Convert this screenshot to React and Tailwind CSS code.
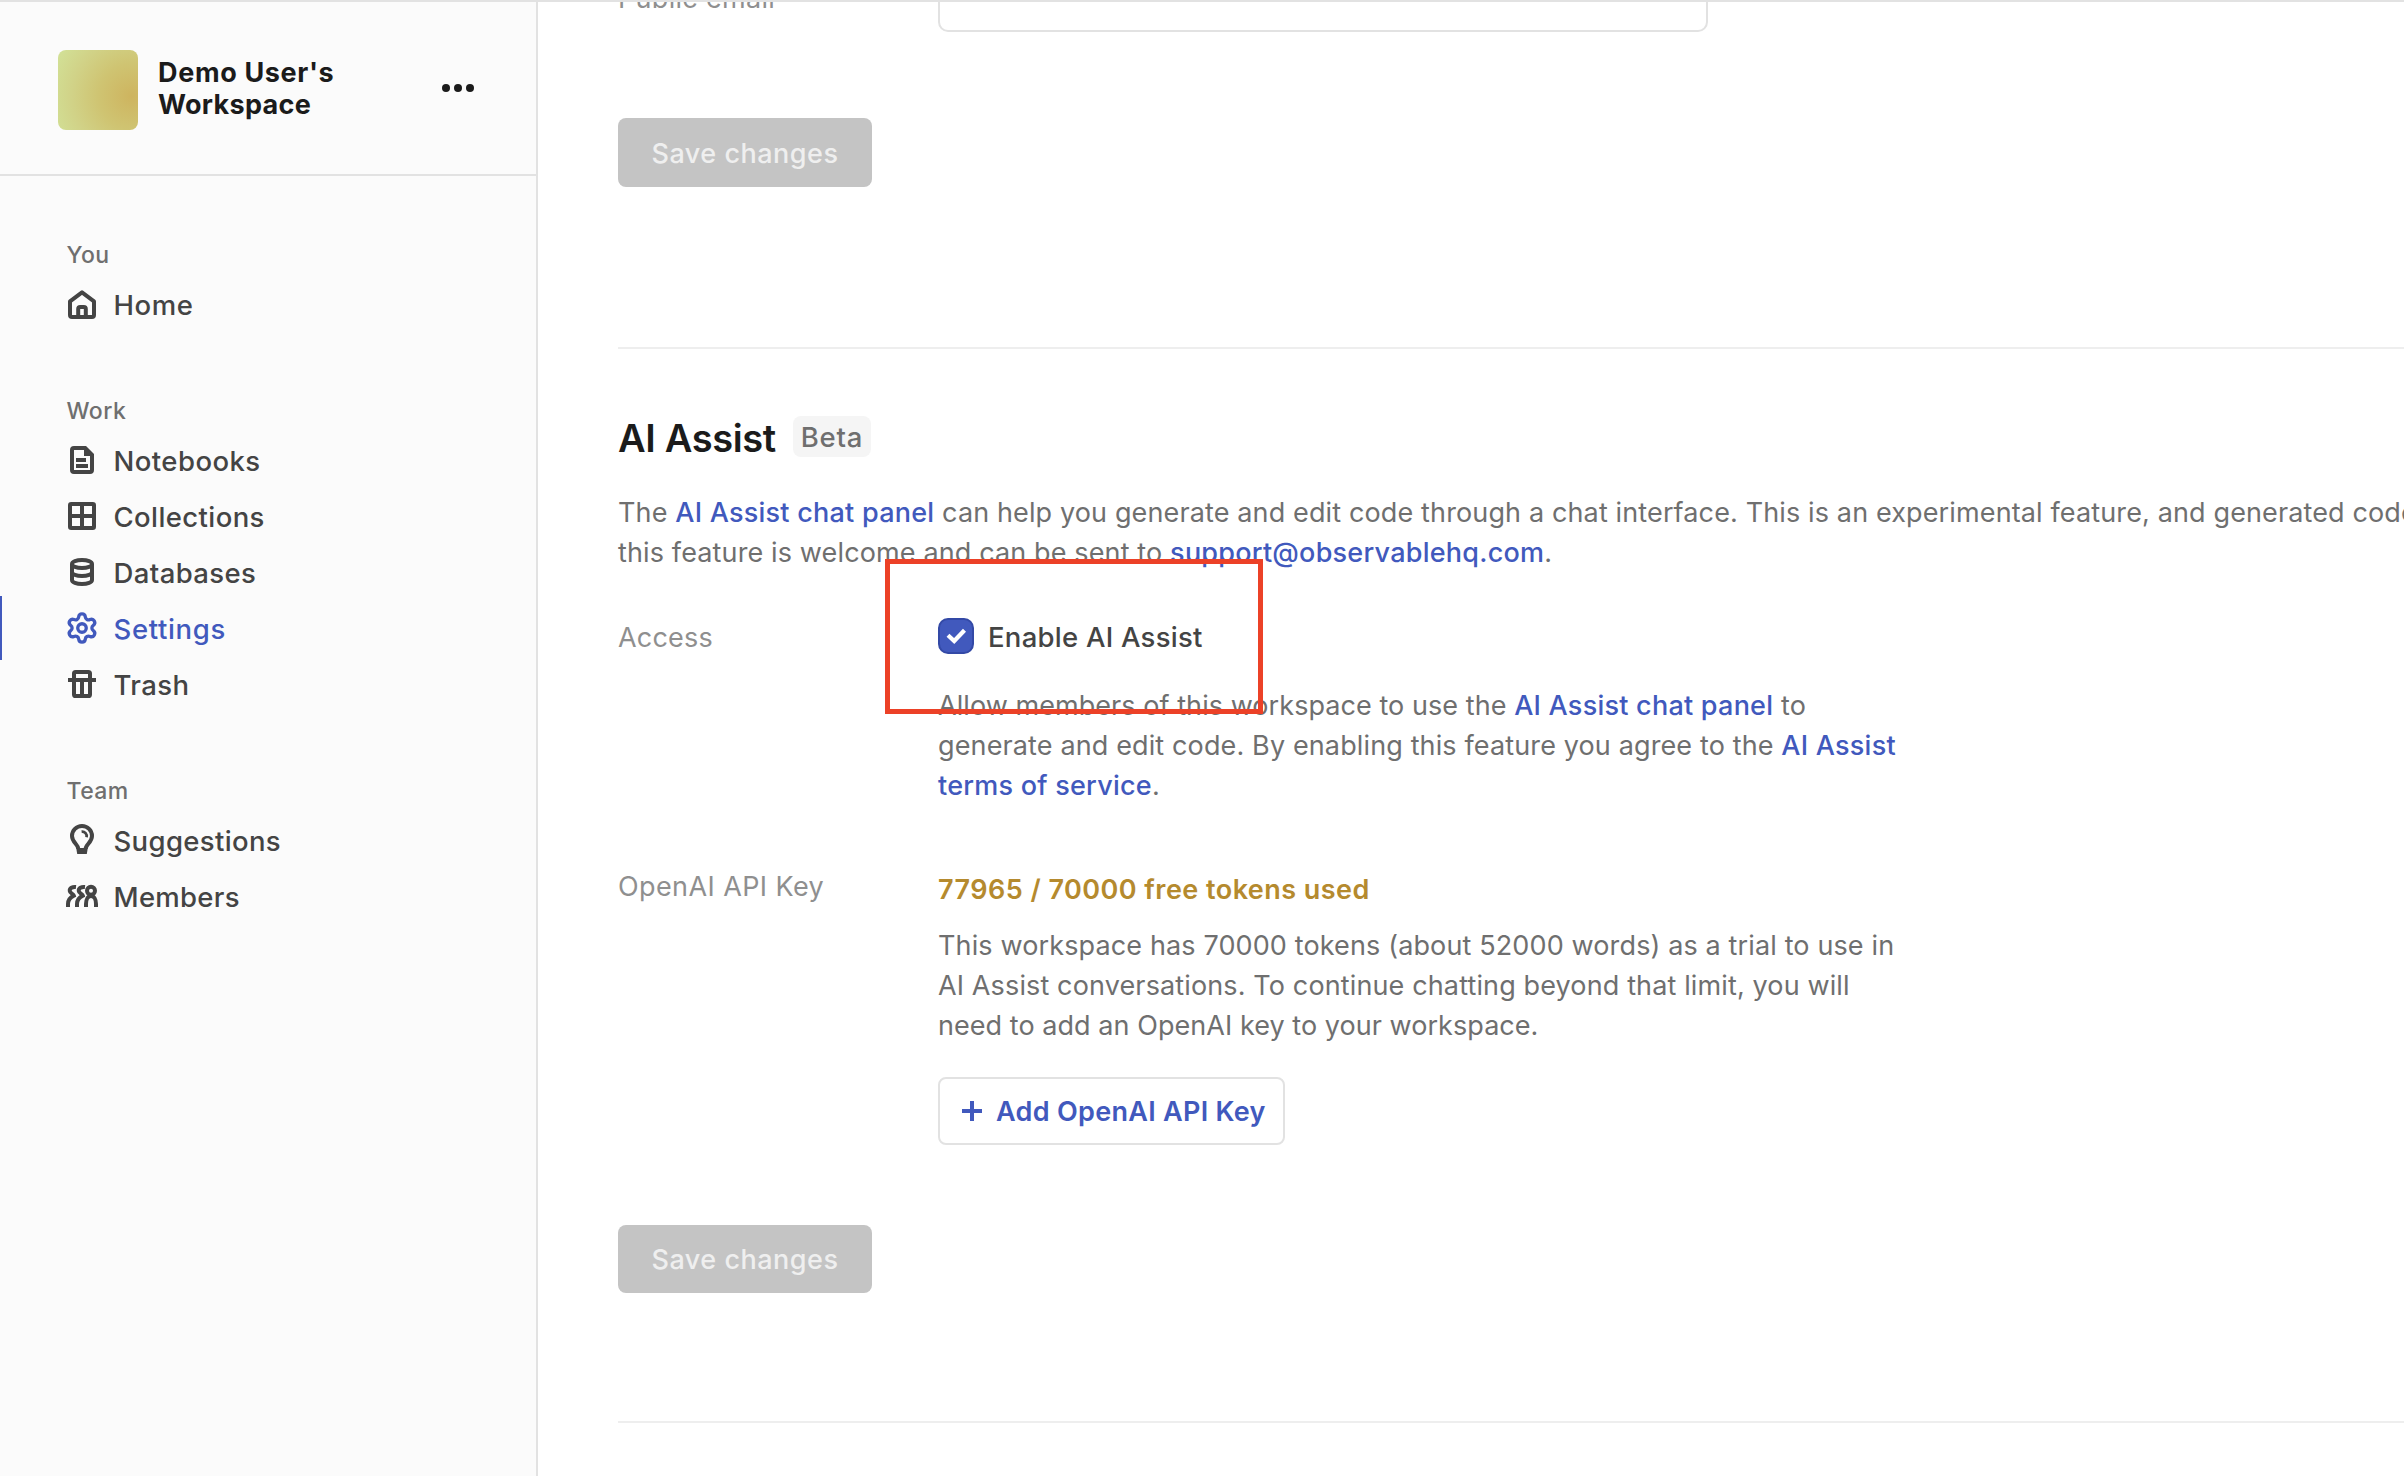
import React from "react";
import { Settings as GearIcon } from "lucide-react";

function Glyph({ children }) {
  return (
    <svg viewBox="0 0 16 16" className="size-8" fill="none" stroke="currentColor" strokeWidth="2">
      {children}
    </svg>
  );
}

const HomeIcon = () => (
  <Glyph>
    <path d="M2 6.7 8 2.2l6 4.5v6.8a1 1 0 0 1-1 1H3a1 1 0 0 1-1-1z" strokeLinejoin="round" />
    <path d="M6.1 14.5v-4a1 1 0 0 1 1-1h1.8a1 1 0 0 1 1 1v4" />
  </Glyph>
);
const NotebookIcon = () => (
  <Glyph>
    <path d="M3 3a1 1 0 0 1 1-1h5.6L13 5.4V13a1 1 0 0 1-1 1H4a1 1 0 0 1-1-1z" />
    <path d="M9 2v4h4.5L9.6 2z" fill="currentColor" stroke="none" />
    <path d="M5 8h5M5 11h6" />
  </Glyph>
);
const GridIcon = () => (
  <Glyph>
    <rect x="2" y="2" width="12" height="12" rx="0.6" />
    <path d="M8 2v12M2 8h12" />
  </Glyph>
);
const DatabaseIcon = () => (
  <Glyph>
    <ellipse cx="8" cy="4" rx="5" ry="2" />
    <path d="M3 4v8c0 1.1 2.2 2 5 2s5-.9 5-2V4M3 8c0 1.1 2.2 2 5 2s5-.9 5-2" />
  </Glyph>
);
const SettingsIcon = () => <GearIcon size={34} strokeWidth={2.35} />;
const TrashIcon = () => (
  <Glyph>
    <rect x="4" y="2" width="8" height="12" rx="0.8" />
    <path d="M1 6h14M8 6v8" />
  </Glyph>
);
const BulbIcon = () => (
  <Glyph>
    <path d="M6.2 12.5C6.2 10.300 3 9.2 3 6a5 5 0 0 1 10 0c0 3.2-3.2 4.3-3.2 6.5" />
    <path d="M5.100 12h5.800l-.5 3H5.600z" fill="currentColor" stroke="none" />
    <path d="M7.800 3.800A2.300 2.300 0 0 1 10.300 6.600" strokeWidth="1.400" />
  </Glyph>
);
const MembersIcon = () => (
  <Glyph>
    <circle cx="12.500" cy="5.400" r="2" />
    <path d="M10 13.500V12c0-2.400 1-4 2.500-4S15 9.600 15 12v1.500" />
    <path d="M5 3.500C3.200 3.300 1.700 4.100 1.900 5.500c.1 1.200 1.700 1.300 2 2.300C2.100 8.700 1 10.300 1 12v1.500" />
    <path d="M9.500 3.500C7.700 3.300 6.200 4.100 6.400 5.500c.1 1.200 1.700 1.300 2 2.300C6.600 8.700 5.500 10.300 5.500 12v1.500" />
  </Glyph>
);

const groups = [
  { label: "You", items: [{ name: "Home", icon: HomeIcon, track: "tracking-[0.6px]" }] },
  {
    label: "Work",
    items: [
      { name: "Notebooks", icon: NotebookIcon, track: "tracking-[0.45px]" },
      { name: "Collections", icon: GridIcon, track: "tracking-[0.4px]" },
      { name: "Databases", icon: DatabaseIcon, track: "tracking-[0.4px]" },
      { name: "Settings", icon: SettingsIcon, track: "tracking-[0.65px]", active: true },
      { name: "Trash", icon: TrashIcon, track: "tracking-[0.4px]" },
    ],
  },
  {
    label: "Team",
    items: [
      { name: "Suggestions", icon: BulbIcon, track: "tracking-[0.35px]" },
      { name: "Members", icon: MembersIcon, track: "tracking-[0.3px]" },
    ],
  },
];

function NavItem({ item }) {
  const Icon = item.icon;
  return (
    <a className={"relative flex h-14 items-center pl-[66px] " + (item.active ? "text-[#4159bd]" : "text-[#444444]")}>
      {item.active && <span className="absolute left-0 top-[-5px] h-16 w-0.5 bg-[#4159bd]" />}
      <span className="-mt-0.5 flex size-8 items-center justify-center [&>svg]:shrink-0">
        <Icon />
      </span>
      <span className={"ml-[15.5px] text-[27.5px] font-[550] " + item.track}>{item.name}</span>
    </a>
  );
}

function Sidebar() {
  return (
    <aside className="w-[538px] shrink-0 border-r-2 border-[#e2e2e2] bg-[#fbfbfb]">
      <div className="flex h-[174px] items-start border-b-2 border-[#e2e2e2] pl-[58px]">
        <div className="mt-12 size-20 rounded-lg bg-[radial-gradient(circle_at_92%_58%,#ceb45f_0%,#cfc472_38%,#d1d287_68%,#d2e298_100%)]" />
        <div className="ml-5 mt-[55px] w-[270px] text-[27px] font-bold leading-8 text-[#1b1b1b]">
          <div className="tracking-[0.65px]">Demo User's</div>
          <div className="tracking-[0.3px]">Workspace</div>
        </div>
        <div className="ml-[14px] mt-[82px] flex gap-1">
          <span className="size-2 rounded-full bg-[#1b1b1b]" />
          <span className="size-2 rounded-full bg-[#1b1b1b]" />
          <span className="size-2 rounded-full bg-[#1b1b1b]" />
        </div>
      </div>
      <nav className="flex flex-col gap-16 pt-[65px]">
        {groups.map((g) => (
          <div key={g.label}>
            <div className="h-9 pl-[66.5px] text-[23px] font-medium leading-7 tracking-[0.45px] text-[#6f6f6f]">{g.label}</div>
            {g.items.map((i) => (
              <NavItem key={i.name} item={i} />
            ))}
          </div>
        ))}
      </nav>
    </aside>
  );
}

const Link = ({ children }) => <a className="font-medium tracking-[0.24px] text-[#4159bd]">{children}</a>;
const Label = ({ children, className = "" }) => (
  <div className={"w-80 shrink-0 text-[#8f8f8f] " + className}>{children}</div>
);
const SaveButton = ({ className }) => (
  <button className={"block w-[254px] rounded-lg bg-[#c4c4c4] pt-0.5 text-center font-medium tracking-[0.5px] text-[#efefef] " + className}>
    Save changes
  </button>
);

function Main() {
  return (
    <main className="min-w-0 flex-1 overflow-hidden bg-white pl-20 tracking-[0.13px] text-[#6f6f6f]">
      <div className="mt-[-50px] flex h-20">
        <Label className="pt-[27px] tracking-[0.3px]">Public email</Label>
        <div className="w-[770px] rounded-[10px] border-2 border-[#e2e2e2] bg-white" />
      </div>
      <SaveButton className="mt-[86px] h-[69px]" />
      <hr className="mt-40 border-t-2 border-[#eeeeee]" />

      <div className="mt-[65px] flex h-12 items-start">
        <h2 className="w-[175px] text-[38px] font-semibold leading-[48px] tracking-[-0.36px] text-[#1b1b1b]">AI Assist</h2>
        <span className="mt-0.5 flex h-[41px] w-[78px] items-center justify-center rounded-lg bg-[#f5f5f5] text-[27.5px] font-medium tracking-[0.8px] text-[#6f6f6f]">
          Beta
        </span>
      </div>
      <p className="mt-[31px] whitespace-nowrap">
        The <Link>AI Assist chat panel</Link> can help you generate and edit code through a chat interface. This is an
        experimental feature, and generated code
        <br />
        this feature is welcome and can be sent to <Link>support@observablehq.com</Link>.
      </p>

      <div className="relative mt-11 flex">
        <Label className="pt-px tracking-[0.2px]">Access</Label>
        <div>
          <div className="flex h-10 items-start">
            <span className="mt-px flex size-9 items-center justify-center rounded-[10px] border-2 border-[#3349a6] bg-[#4159bd]">
              <svg viewBox="0 0 36 36" className="size-9 shrink-0" fill="none" stroke="white" strokeWidth="4.2">
                <path d="M10 17.200l6.200 5.800L26.500 12.200" />
              </svg>
            </span>
            <span className="ml-[14px] text-[27.5px] font-[550] tracking-[0.25px] text-[#444444]">Enable AI Assist</span>
          </div>
          <p className="mt-[29px] whitespace-nowrap">
            <span className="tracking-[0.06px]">Allow members of this workspace to use the </span>
            <Link>AI Assist chat panel</Link> to
            <br />
            generate and edit code. By enabling this feature you agree to the <Link>AI Assist</Link>
            <br />
            <Link>terms of service</Link>.
          </p>
        </div>
        {/* Highlight frame around the checkbox */}
        <div className="absolute left-[267px] top-[-58px] h-[155px] w-[378px] border-[5px] border-[#ec4127]" />
      </div>

      <div className="mt-[60px] flex">
        <Label className="pt-px tracking-[0.4px]">OpenAI API Key</Label>
        <div>
          <div className="mt-1 font-semibold tracking-[0.46px] text-[#b58a2e]">77965 / 70000 free tokens used</div>
          <p className="mt-4 whitespace-nowrap">
            This workspace has 70000 tokens (about 52000 words) as a trial to use in
            <br />
            AI Assist conversations. To continue chatting beyond that limit, you will
            <br />
            <span className="tracking-[0.05px]">need to add an OpenAI key to your workspace.</span>
          </p>
          <button className="mt-[31px] flex h-[68px] w-[347px] items-center rounded-lg border-2 border-[#e2e2e2] bg-white pl-[22px] font-semibold tracking-[0.3px] text-[#4159bd]">
            <svg viewBox="0 0 20 20" className="size-5" stroke="currentColor" strokeWidth="4">
              <path d="M10 0v20M0 10h20" />
            </svg>
            <span className="ml-[14px] mt-0.5">Add OpenAI API Key</span>
          </button>
        </div>
      </div>
      <SaveButton className="mt-20 h-[68px]" />
      <hr className="mt-32 border-t-2 border-[#eeeeee]" />
    </main>
  );
}

export default function App() {
  return (
    <div className="flex h-[1476px] w-[2404px] overflow-hidden border-t-2 border-[#e2e2e2] bg-white font-['Inter',sans-serif] text-[27px] leading-10">
      <Sidebar />
      <Main />
    </div>
  );
}
